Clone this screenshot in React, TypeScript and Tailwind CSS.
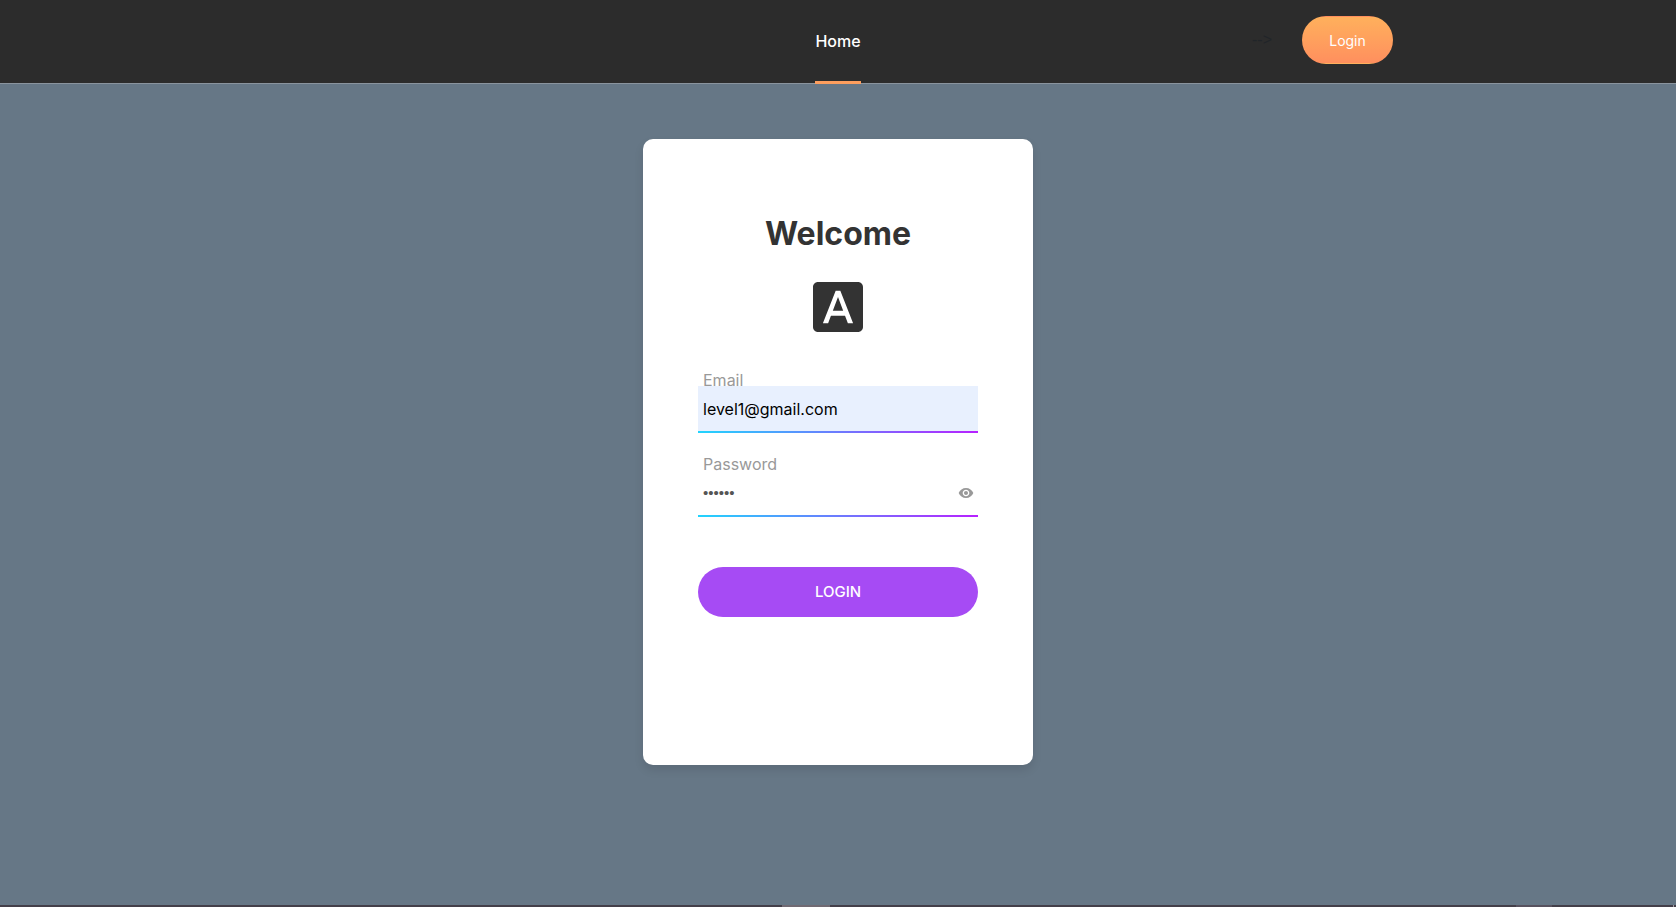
import { useState } from "react";
import { MdFontDownload, MdVisibility } from "react-icons/md";

function Header() {
  return (
    <header className="border-b border-[#8a949e] bg-[#2c2c2c] px-4">
      <div className="mx-auto grid h-[83px] max-w-[1110px] grid-cols-3 items-stretch">
        <nav className="col-start-2 flex justify-center">
          <a
            href="#home"
            className="-mb-px flex items-center border-b-3 border-[#fd9e5e] text-[16px] font-medium text-white"
          >
            Home
          </a>
        </nav>
        <div className="flex items-center justify-end gap-[30px] pb-[3px]">
          <span className="font-['Liberation_Sans',sans-serif] text-[16px] text-[#212529]">
            {"-->"}
          </span>
          <a
            href="#login"
            className="flex h-12 w-[91px] items-center justify-center rounded-full border border-transparent bg-linear-to-b from-[#ffb05c] to-[#ff8f5e] text-[14px] text-white"
          >
            Login
          </a>
        </div>
      </div>
    </header>
  );
}

function Underline() {
  return <div className="h-[2px] bg-linear-to-r/srgb from-[#21d4fd] to-[#b721ff]" />;
}

function LoginCard() {
  const [email, setEmail] = useState("level1@gmail.com");
  const [password, setPassword] = useState("secret");
  const [visible, setVisible] = useState(false);

  return (
    <form
      onSubmit={(e) => e.preventDefault()}
      className="flex min-h-[626px] w-[390px] max-w-full flex-col rounded-[10px] bg-white px-[55px] pt-[77px] pb-8 shadow-[0_5px_10px_0_rgba(0,0,0,0.1)]"
    >
      <h1 className="text-center text-[32px] leading-9 font-bold text-[#333333]">Welcome</h1>
      <MdFontDownload className="mt-[25px] size-[60px] self-center text-[#333333]" aria-hidden="true" />

      <div className="mt-[37px] flex flex-col">
        <label htmlFor="email" className="px-[5px] text-[16px] leading-3 text-[#999999]">
          Email
        </label>
        <input
          id="email"
          type="email"
          value={email}
          onChange={(e) => setEmail(e.target.value)}
          className="h-[45px] w-full bg-[#e8f0fe] px-[5px] text-[16px] text-black outline-none"
        />
        <Underline />
      </div>

      <div className="mt-[25px] flex flex-col">
        <label htmlFor="password" className="px-[5px] text-[16px] leading-3 text-[#999999]">
          Password
        </label>
        <div className="flex h-[45px] items-center">
          <input
            id="password"
            type={visible ? "text" : "password"}
            value={password}
            onChange={(e) => setPassword(e.target.value)}
            className="h-full min-w-0 flex-1 px-[5px] font-['Liberation_Sans',sans-serif] text-[15px] text-[#555555] outline-none"
          />
          <button
            type="button"
            aria-label="Show password"
            onClick={() => setVisible(!visible)}
            className="px-1 text-[#999999]"
          >
            <MdVisibility className="size-4" />
          </button>
        </div>
        <Underline />
      </div>

      <button
        type="submit"
        className="mt-[50px] h-[50px] w-full rounded-full bg-[#a64bf4] text-[15px] font-medium text-white"
      >
        LOGIN
      </button>
    </form>
  );
}

function BottomStrip() {
  return (
    <footer className="flex h-[2px] bg-[#433f49]">
      <div className="w-[46.66%]" />
      <div className="w-12 bg-[#706a73]" />
      <div className="mr-[121px] ml-auto w-9 bg-[#57525f]" />
      <div className="mr-[2px] w-px bg-[#a09ca4]" />
    </footer>
  );
}

export default function App() {
  return (
    <div className="flex min-h-screen flex-col bg-[#667786] font-['Inter','Liberation_Sans',sans-serif]">
      <Header />
      <main className="flex flex-1 justify-center px-4 pt-[55px] pb-10">
        <div>
          <LoginCard />
        </div>
      </main>
      <BottomStrip />
    </div>
  );
}
